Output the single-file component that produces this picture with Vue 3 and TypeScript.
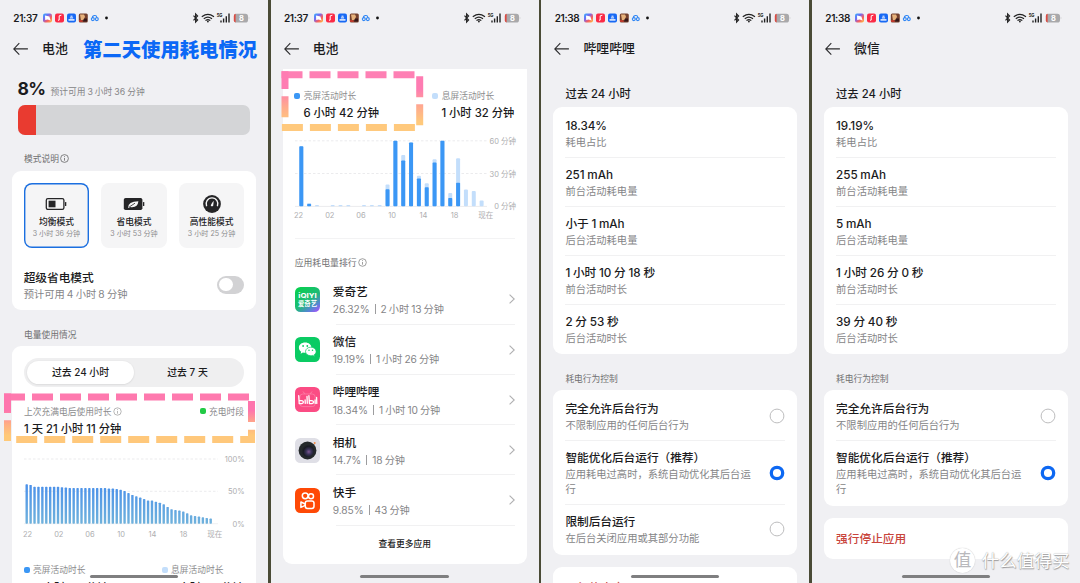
<script setup lang="ts">
interface Detail { value: string; name: string }
interface Choice { title: string; note: string; on: boolean }
interface Phone {
  kind: 'modes' | 'ranking' | 'app'
  time: string
  title: string
  details: Detail[]
  choices: Choice[]
}

const allow: Choice = { title: '完全允许后台行为', note: '不限制应用的任何后台行为', on: false }
const smart: Choice = { title: '智能优化后台运行（推荐）', note: '应用耗电过高时，系统自动优化其后台运行', on: true }
const limit: Choice = { title: '限制后台运行', note: '在后台关闭应用或其部分功能', on: false }

const names = ['耗电占比', '前台活动耗电量', '后台活动耗电量', '前台活动时长', '后台活动时长']
const withNames = (values: string[]): Detail[] => values.map((value, i) => ({ value, name: names[i] }))

const phones: Phone[] = [
  { kind: 'modes', time: '21:37', title: '电池', details: [], choices: [] },
  { kind: 'ranking', time: '21:37', title: '电池', details: [], choices: [] },
  {
    kind: 'app', time: '21:38', title: '哔哩哔哩',
    details: withNames(['18.34%', '251 mAh', '小于 1 mAh', '1 小时 10 分 18 秒', '2 分 53 秒']),
    choices: [allow, smart, limit],
  },
  {
    kind: 'app', time: '21:38', title: '微信',
    details: withNames(['19.19%', '255 mAh', '5 mAh', '1 小时 26 分 0 秒', '39 分 40 秒']),
    choices: [allow, smart],
  },
]

const modes = [
  { icon: 'half', name: '均衡模式', left: '3 小时 36 分钟' },
  { icon: 'leaf', name: '省电模式', left: '3 小时 53 分钟' },
  { icon: 'gauge', name: '高性能模式', left: '3 小时 25 分钟' },
]

const apps = [
  { icon: 'iqiyi', name: '爱奇艺', use: '26.32%', time: '2 小时 13 分钟' },
  { icon: 'wechat', name: '微信', use: '19.19%', time: '1 小时 26 分钟' },
  { icon: 'bili', name: '哔哩哔哩', use: '18.34%', time: '1 小时 10 分钟' },
  { icon: 'camera', name: '相机', use: '14.7%', time: '18 分钟' },
  { icon: 'kuaishou', name: '快手', use: '9.85%', time: '43 分钟' },
]

// Battery level every half hour, in percent
const levels = [
  61, 60, 57, 57, 57, 57, 57, 57, 57, 56.5, 56, 55, 55, 55, 55, 55, 55, 55, 55, 55, 55, 54.5, 54.5, 53.5,
  52.5, 50.5, 47.5, 44.5, 42.5, 40.5, 38, 36, 36, 34, 32.5, 30, 26, 22.5, 21, 20.5, 19, 16, 13, 12, 11, 10, 9, 8,
]
// [screen on, total] minutes per hour
const hours: [number, number][] = [
  [55, 55], [2, 3], [0, 1], [0, 0], [0, 1], [0, 1], [0, 1], [0, 0], [0, 1], [0, 1], [0, 1], [15.5, 20],
  [60, 60], [42, 47], [58.5, 58.5], [25.5, 28], [17.5, 21], [40, 43], [60, 60], [7.5, 12], [21.5, 44],
  [0, 15.3], [0, 14], [0, 5.3],
]
const ticks = ['22', '02', '06', '10', '14', '18', '现在']
const tickX = (i: number): number => (i === 6 ? 214.8 : 27.6 + i * 31.2)
</script>

<template>
  <main class="board">
    <section v-for="(p, n) in phones" :key="n" class="phone">
      <div class="status">
        <span class="clock">{{ p.time }}</span>
        <svg class="notices" width="68" height="10" viewBox="0 0 68 10">
          <defs>
            <linearGradient :id="'rb' + n" x1="0" y1="0" x2="1" y2="1">
              <stop offset="0" stop-color="#2fb4ff" /><stop offset=".35" stop-color="#6f6cf5" /><stop offset=".65" stop-color="#f75d62" /><stop offset="1" stop-color="#ffc93a" />
            </linearGradient>
          </defs>
          <rect x="0" y=".5" width="9" height="9" rx="2" :fill="'url(#rb' + n + ')'" />
          <path d="M2 2.400 6.400 3.600 7.600 7.400 4.600 6.600 2.200 7Z" fill="#fff" />
          <rect x="12" y=".5" width="9" height="9" rx="2" fill="#fb2b46" />
          <path d="M16.200 7V2.800l2.200-.6M15 7.200h1.200" stroke="#fff" stroke-width="1" fill="none" />
          <rect x="24" y=".5" width="9" height="9" rx="2" fill="#1769f4" />
          <path d="M25.500 6.900h6" stroke="#fff" stroke-width="1.400" /><path d="M26.900 4.900h3.200M27.500 3.200h2" stroke="#fff" stroke-width="1" />
          <rect x="35.800" y=".5" width="9" height="9" rx="1.500" fill="#74402d" />
          <path d="M37 1.500h4l1 2-1 3-3 1Z" fill="#e6b27c" />
          <path d="M41 5.500h3v3h-4Z" fill="#35171a" />
          <path d="M36 7h3l1 2h-4Z" fill="#bd3a2c" />
          <g fill="none" stroke="#2f86f5" stroke-width="1.100">
            <path d="M49.500 5.200a2.100 2.100 0 0 1 4.400-.9" /><circle cx="49.800" cy="6.100" r="1.500" /><circle cx="53.800" cy="6.100" r="1.500" />
          </g>
          <circle cx="63.500" cy="5" r="1.400" fill="#111" />
        </svg>
        <svg class="signals" width="58" height="12" viewBox="0 0 58 12">
          <path d="M1.500 3.600 5.600 8 3.600 10V2l2 2-4.100 4.400" fill="none" stroke="#222" stroke-width="1.150" />
          <g fill="none" stroke="#222" stroke-width="1.200" stroke-linecap="round">
            <path d="M10.200 4.500q5.700-4.400 11.400 0M12.200 6.500q3.700-2.900 7.400 0M14 8.300q1.900-1.400 3.800 0" />
          </g>
          <circle cx="15.900" cy="9.500" r=".9" fill="#222" />
          <text x="27.600" y="5.400" class="fiveg" textLength="5.800" lengthAdjust="spacingAndGlyphs">5G</text>
          <path d="M29 10.500V8.400M31.600 10.500V6.400M34.300 10.500V4.200M37 10.500V1.600" stroke="#222" stroke-width="1.400" />
          <rect x="42" y="1.700" width="14" height="8.800" rx="2.600" fill="#a9a9ab" />
          <path d="M43.600 1.700h-.2q-1.600.2-1.600 2.200v4.400q0 2 1.800 2.200Z" fill="#dc4b42" />
          <path d="M56.800 4.600q1 1.500 0 3Z" fill="#a9a9ab" />
          <text x="49.500" y="8.800" class="cell">8</text>
        </svg>
      </div>

      <header class="head">
        <svg width="15" height="14" viewBox="0 0 15 14"><path d="M6.300 1.200.8 6.900l5.500 5.700M.9 6.900h14" fill="none" stroke="#2b2b2d" stroke-width="1.100" /></svg>
        <h1>{{ p.title }}</h1>
      </header>

      <template v-if="p.kind === 'modes'">
        <div class="charge"><b>8%</b><span>预计可用 3 小时 36 分钟</span></div>
        <div class="meter"><i></i></div>
        <div class="caption mode-cap">模式说明
          <svg width="9" height="9" viewBox="0 0 9 9"><circle cx="4.500" cy="4.500" r="3.900" fill="none" stroke="#666" stroke-width=".8" /><path d="M4.500 4v2.700M4.500 2.200v.9" stroke="#666" stroke-width=".8" /></svg>
        </div>
        <div class="card mode-card">
          <div class="modes">
            <div v-for="(m, k) in modes" :key="m.name" class="mode" :class="{ picked: k === 0 }">
              <svg width="24" height="20" viewBox="0 0 24 20">
                <g v-if="m.icon === 'half'">
                  <rect x="2.300" y="5.600" width="17.600" height="10.800" rx="1.600" fill="none" stroke="#252527" stroke-width="1.300" />
                  <rect x="4.600" y="7.700" width="6.900" height="6.600" fill="#252527" /><rect x="21" y="9.100" width="1.300" height="3.800" rx=".5" fill="#252527" />
                </g>
                <g v-else-if="m.icon === 'leaf'">
                  <rect x="1.800" y="5" width="18.600" height="12" rx="1.800" fill="#252527" /><rect x="21" y="9.100" width="1.300" height="3.800" rx=".5" fill="#252527" />
                  <path d="M6.200 14.700q-.4-6 10.200-6.400-.7 7-8.400 5.800l-1.200 1Z" fill="#f5f5f6" /><path d="M7.200 14 13 10.200" stroke="#252527" stroke-width=".8" />
                </g>
                <g v-else>
                  <circle cx="12" cy="11" r="8.900" fill="#252527" />
                  <path d="M6.600 13.200a5.900 5.900 0 1 1 10.800 0" fill="none" stroke="#f5f5f6" stroke-width="1.400" />
                  <path d="m13.700 7.700-.5 5q-1.200 1.300-2.400 0-.2-1 2.900-5Z" fill="#f5f5f6" />
                </g>
              </svg>
              <strong>{{ m.name }}</strong>
              <small>{{ m.left }}</small>
            </div>
          </div>
          <div class="super">
            <div><h2>超级省电模式</h2><p>预计可用 4 小时 8 分钟</p></div>
            <span class="toggle"></span>
          </div>
        </div>
        <div class="caption use-cap">电量使用情况</div>
        <div class="card use-card">
          <div class="tabs"><span class="tab on">过去 24 小时</span><span class="tab">过去 7 天</span></div>
          <div class="since">
            <span>上次充满电后使用时长
              <svg width="9" height="9" viewBox="0 0 9 9"><circle cx="4.500" cy="4.500" r="3.700" fill="none" stroke="#999" stroke-width=".7" /><path d="M4.500 4v2.700M4.500 2.200v.9" stroke="#999" stroke-width=".7" /></svg>
            </span>
            <span class="key"><i class="green"></i>充电时段</span>
          </div>
          <div class="duration">1 天 21 小时 11 分钟</div>
          <svg class="chart" width="244" height="90" viewBox="12 452 244 90">
            <defs>
              <linearGradient id="level" gradientUnits="userSpaceOnUse" x1="0" y1="484" x2="0" y2="524">
                <stop offset="0" stop-color="#4a90ea" /><stop offset="1" stop-color="#70b2dc" />
              </linearGradient>
            </defs>
            <path d="M24 459h194M24 491.300h194" stroke="#e6e6e8" stroke-width=".8" stroke-dasharray="2.500 2" />
            <path d="M24 523.700h194" stroke="#ececee" stroke-width=".8" />
            <rect v-for="(v, k) in levels" :key="k" :x="25.5 + k * 3.915" :y="523.7 - v * 0.647" width="2.400" :height="v * 0.647" rx=".7" fill="url(#level)" />
            <g class="axis end"><text x="244.700" y="462">100%</text><text x="244.700" y="494.300">50%</text><text x="244.700" y="526.700">0%</text></g>
            <g class="axis mid"><text v-for="(t, k) in ticks" :key="t" :x="tickX(k)" y="536.500">{{ t }}</text></g>
          </svg>
          <div class="legend low">
            <div><span class="key"><i class="blue"></i>亮屏活动时长</span><b>6 小时 42 分钟</b></div>
            <div><span class="key"><i class="pale"></i>息屏活动时长</span><b>1 小时 32 分钟</b></div>
          </div>
        </div>
      </template>

      <template v-else-if="p.kind === 'ranking'">
        <div class="card rank-card">
          <div class="legend">
            <div><span class="key"><i class="blue"></i>亮屏活动时长</span><b>6 小时 42 分钟</b></div>
            <div><span class="key"><i class="pale"></i>息屏活动时长</span><b>1 小时 32 分钟</b></div>
          </div>
          <svg class="chart" width="244" height="107" viewBox="12 131.500 244 107">
            <path d="M24 140.300h192M24 173h192" stroke="#e6e6e8" stroke-width=".8" stroke-dasharray="2.500 2" />
            <path d="M24 205.900h192" stroke="#e6e6e8" stroke-width=".8" />
            <g v-for="(h, k) in hours" :key="k">
              <rect :x="28.3 + k * 7.84" :y="205.7 - h[1] * 1.09" width="4" :height="h[1] * 1.09" rx="1" fill="#c3defb" />
              <rect :x="28.3 + k * 7.84" :y="205.7 - h[0] * 1.09" width="4" :height="h[0] * 1.09" rx=".8" fill="#3b97f5" />
            </g>
            <g class="axis end"><text x="245" y="143.900">60 分钟</text><text x="245" y="176.200">30 分钟</text><text x="245" y="208.900">0 分钟</text></g>
            <g class="axis mid"><text v-for="(t, k) in ticks" :key="t" :x="tickX(k)" y="217.900">{{ t }}</text></g>
            <path d="M24 238.100h220" stroke="#eeeeef" stroke-width=".8" />
          </svg>
          <div class="caption rank-cap">应用耗电量排行
            <svg width="9" height="9" viewBox="0 0 9 9"><circle cx="4.500" cy="4.500" r="3.800" fill="none" stroke="#777" stroke-width=".7" /><path d="M4.500 4v2.700M4.500 2.200v.9" stroke="#777" stroke-width=".7" /></svg>
          </div>
          <div v-for="a in apps" :key="a.name" class="app">
            <svg width="25" height="25" viewBox="0 0 25 25">
              <g v-if="a.icon === 'iqiyi'">
                <defs>
                  <linearGradient id="iq" x1=".2" y1="0" x2=".95" y2="1"><stop offset="0" stop-color="#08cf50" /><stop offset=".5" stop-color="#1eba78" /><stop offset=".78" stop-color="#5685d6" /><stop offset="1" stop-color="#b04dff" /></linearGradient>
                </defs>
                <rect width="25" height="25" rx="5.500" fill="url(#iq)" />
                <text x="12.500" y="11" class="iq" textLength="18.500" lengthAdjust="spacingAndGlyphs">iQIYI</text>
                <text x="12.500" y="18.900" class="iq cn">爱奇艺</text>
              </g>
              <g v-else-if="a.icon === 'wechat'">
                <rect width="25" height="25" rx="5.500" fill="#0acb63" />
                <path d="M10.200 5.600c-3.600 0-6.300 2.200-6.300 5.100 0 1.700.9 3 2.300 4l-.6 2 2.300-1.200q1.200.3 2.500.3c3.500 0 6-2.200 6-5.100s-2.700-5.100-6.200-5.100Z" fill="#fff" />
                <path d="M15.800 10.200c-3 0-5.300 2-5.300 4.300s2.300 4.200 5.300 4.200q1 0 2-.3l1.800 1-.5-1.600c1.200-.8 2-1.900 2-3.300 0-2.400-2.300-4.300-5.300-4.300Z" fill="#fff" stroke="#0acb63" stroke-width=".7" />
                <g fill="#0acb63"><circle cx="8.100" cy="9" r=".9" /><circle cx="12.300" cy="9" r=".9" /><circle cx="14" cy="13.300" r=".75" /><circle cx="17.500" cy="13.300" r=".75" /></g>
              </g>
              <g v-else-if="a.icon === 'bili'">
                <rect width="25" height="25" rx="5.500" fill="#fb4c84" />
                <path d="m8 4.500 2 2.500M17 4.500l-2 2.500" stroke="#fc7ba4" stroke-width="1" /><rect x="4.800" y="7" width="15.400" height="12.600" rx="3" fill="none" stroke="#fc7ba4" stroke-width=".9" />
                <g fill="none" stroke="#fff" stroke-width="1.300" stroke-linecap="round">
                  <path d="M3.700 8.700 4.200 16.500q4.200.5 4.200-1.500 0-1.800-3.900-1.300M10.100 12.900l.2 3.500M12 9.500l.3 6.900" />
                  <path d="M13.900 8.700 14.400 16.500q4.200.5 4.200-1.500 0-1.800-3.900-1.300M20.100 12.900l.1 3.500M21.600 10.500l.2 5.900" />
                </g>
              </g>
              <g v-else-if="a.icon === 'camera'">
                <defs>
                  <radialGradient id="lens" cx=".6" cy=".6" r=".6"><stop offset="0" stop-color="#7d5792" /><stop offset=".35" stop-color="#393457" /><stop offset=".7" stop-color="#191c24" /><stop offset="1" stop-color="#262b2d" /></radialGradient>
                </defs>
                <rect width="25" height="25" rx="5.500" fill="#dfdfe6" />
                <circle cx="12.500" cy="12.500" r="8.900" fill="#24292b" /><circle cx="12.500" cy="12.500" r="6.500" fill="url(#lens)" /><circle cx="19.700" cy="5" r="1" fill="#f28a43" />
              </g>
              <g v-else>
                <rect width="25" height="25" rx="5.500" fill="#fe4906" />
                <g fill="none" stroke="#fff" stroke-width="1.500">
                  <circle cx="10.200" cy="7.800" r="2.900" /><circle cx="16" cy="8.200" r="2.500" /><rect x="10.300" y="12.900" width="8.700" height="7.600" rx="2.200" /><path d="m10.200 16-4.300-2v5.400l4.300-2" stroke-linejoin="round" />
                </g>
              </g>
            </svg>
            <div class="app-body">
              <div><h2>{{ a.name }}</h2><p>{{ a.use }}<i></i>{{ a.time }}</p></div>
              <svg width="6" height="10" viewBox="0 0 6 10"><path d="m.6.6 4.600 4.400L.6 9.400" fill="none" stroke="#b0b0b2" stroke-width="1.100" /></svg>
            </div>
          </div>
          <div class="more">查看更多应用</div>
        </div>
      </template>

      <template v-else>
        <h3 class="period">过去 24 小时</h3>
        <div class="card detail-card">
          <div v-for="d in p.details" :key="d.name" class="detail"><h2>{{ d.value }}</h2><p>{{ d.name }}</p></div>
        </div>
        <div class="caption control-cap">耗电行为控制</div>
        <div class="card">
          <div v-for="c in p.choices" :key="c.title" class="choice">
            <div><h2>{{ c.title }}</h2><p>{{ c.note }}</p></div>
            <svg class="radio" width="16" height="16" viewBox="0 0 16 16">
              <circle v-if="c.on" cx="8" cy="8" r="5.700" fill="#fff" stroke="#0d68f2" stroke-width="3.300" />
              <circle v-else cx="8" cy="8" r="6.900" fill="none" stroke="#b5b5b7" stroke-width=".9" />
            </svg>
          </div>
        </div>
        <div class="card stop">强行停止应用</div>
      </template>

      <span class="home"></span>
    </section>

    <div class="note">第二天使用耗电情况</div>
    <svg class="marks" width="430" height="450" viewBox="0 0 430 450">
      <defs>
        <linearGradient id="m1" gradientUnits="userSpaceOnUse" x1="0" y1="393" x2="0" y2="443">
          <stop offset=".35" stop-color="#fe75ad" /><stop offset=".62" stop-color="#ffad84" /><stop offset=".85" stop-color="#ffc978" />
        </linearGradient>
        <linearGradient id="m2" gradientUnits="userSpaceOnUse" x1="0" y1="71" x2="0" y2="131">
          <stop offset=".3" stop-color="#fe7cb2" /><stop offset=".6" stop-color="#ffab8e" /><stop offset=".85" stop-color="#ffc97b" />
        </linearGradient>
      </defs>
      <g fill="none" stroke="url(#m1)" stroke-width="7">
        <path d="M4 397h245.200" stroke-dasharray="21 7" stroke="#fe79ae" />
        <path d="M7.500 393.500V413M7.500 420.300V441M251.500 401v21M251.500 429.700V443" />
        <path d="M16.200 439.500H255" stroke-dasharray="21 7" stroke="#ffc87b" />
      </g>
      <g fill="none" stroke="url(#m2)" stroke-width="7">
        <path d="M281.500 74.800h133.200" stroke-dasharray="21 7" stroke="#fe80b4" />
        <path d="M285 71.300V89M285 96.300v21M419.700 76.300v21M419.700 104.300v21" />
        <path d="M281.900 127.600h133" stroke-dasharray="21 7" stroke="#ffc97d" />
      </g>
    </svg>
    <div class="watermark"><span>值</span>什么值得买</div>
  </main>
</template>

<style>
body { margin: 0; background: #4a4b36; }
</style>

<style scoped>
.board {
  position: relative; display: grid; grid-template-columns: repeat(4, 267.9px); column-gap: 2.8px;
  width: 1080px; height: 583px; overflow: hidden; background: #4a4b36; color: #1b1b1d;
  font-family: Inter, "Noto Sans CJK SC", sans-serif; font-size: 10.25px;
}
.phone { position: relative; height: 583px; overflow: hidden; background: #f0f0f3; }
h1, h2, h3, p { margin: 0; white-space: nowrap; }
h1 { font-size: 12.9px; font-weight: 500; line-height: 20px; }
h2 { font-size: 11.7px; font-weight: 500; line-height: 16px; letter-spacing: -.04px; word-spacing: -.3px; }
p { font-size: 10.3px; line-height: 16px; color: #858587; }
svg { display: block; flex: none; }

.status { display: flex; align-items: center; height: 35px; padding-left: 13.3px; }
.clock { width: 29.7px; font-size: 10px; font-weight: 600; letter-spacing: -.35px; white-space: nowrap; }
.signals { margin-left: 81px; }
.fiveg { font-size: 5px; font-weight: 700; text-anchor: middle; fill: #222; }
.cell { font-size: 7.5px; font-weight: 700; text-anchor: middle; fill: #fff; }
.iq { font-size: 6.6px; font-weight: 700; text-anchor: middle; fill: #fff; }
.iq.cn { font-size: 6.3px; }
.head { display: flex; align-items: center; gap: 14px; height: 33px; padding: 0 0 0 13px; box-sizing: border-box; }
.head svg { margin-top: -5px; }
.head h1 { margin-top: -4.5px; }

.card { margin: 0 12px; border-radius: 9px; background: #fff; width: 244px; box-sizing: border-box; overflow: hidden; }
.caption { display: flex; align-items: center; gap: 1px; padding-left: 24px; box-sizing: border-box; font-size: 8.75px; color: #707072; white-space: nowrap; }
.charge { display: flex; align-items: baseline; gap: 5px; height: 37px; padding: 10px 0 0 17.5px; box-sizing: border-box; line-height: 22px; }
.charge b { font-size: 17.5px; font-weight: 700; letter-spacing: -.6px; }
.charge span { font-size: 8.75px; letter-spacing: -.02px; word-spacing: -.4px; color: #858587; }
.meter { width: 232.5px; height: 30px; margin-left: 17.5px; border-radius: 7px; background: #d4d5d7; overflow: hidden; }
.meter i { display: block; width: 18.7px; height: 30px; background: #e93b30; }
.mode-cap { height: 35.7px; padding-top: 11.7px; }
.mode-card { height: 139.8px; padding: 12.6px 11.7px 0; }
.modes { display: flex; justify-content: space-between; }
.mode { display: flex; flex-direction: column; align-items: center; width: 65.5px; height: 65px; padding-top: 10px; box-sizing: border-box; border-radius: 8px; background: #f5f5f6; white-space: nowrap; }
.mode.picked { box-shadow: inset 0 0 0 1.4px #1b6fe0; }
.mode strong { font-size: 8.75px; line-height: 12px; font-weight: 500; margin-top: 3px; }
.mode small { font-size: 7.1px; line-height: 10px; margin-top: .5px; color: #8c8c8e; }
.super { display: flex; justify-content: space-between; align-items: center; margin-top: 21.3px; }
.super p { font-size: 10.25px; word-spacing: -.7px; }
.toggle { width: 27.5px; height: 18px; margin-top: -2px; padding: 2.3px; box-sizing: border-box; border-radius: 9px; background: #d2d2d4; }
.toggle::before { content: ""; display: block; width: 13.4px; height: 13.4px; border-radius: 50%; background: #fff; }
.use-cap { height: 35.5px; padding-top: 13.5px; }
.use-card { height: 260px; padding-top: 12px; }
.tabs { display: flex; width: 220px; height: 29px; margin-left: 12px; padding: 3px; box-sizing: border-box; border-radius: 15px; background: #efeff0; font-size: 9.9px; font-weight: 500; line-height: 23px; text-align: center; }
.tab { width: 107px; height: 23px; border-radius: 12px; }
.tab.on { background: #fff; box-shadow: 0 .5px 2px rgba(0, 0, 0, .12); }
.since { display: flex; justify-content: space-between; align-items: center; height: 16px; margin: 16.5px 12px 0; font-size: 8.75px; color: #8c8c8e; }
.since span { display: flex; align-items: center; gap: 1px; }
.key { display: flex; align-items: center; white-space: nowrap; }
.key i { width: 6px; height: 6px; margin-right: 3.5px; border-radius: 2px; flex: none; }
.since .key i { margin-right: 2.5px; }
.green { background: #22ca45; }
.blue { background: #3b97f5; }
.pale { background: #c3defb; }
.duration { margin: 1.5px 12px 0; height: 16px; line-height: 16px; font-size: 11.3px; font-weight: 500; white-space: nowrap; }
.use-card .chart { margin-top: 15px; }
.axis { font-size: 7.5px; fill: #aeaeb0; }
.end { text-anchor: end; }
.mid { text-anchor: middle; }
.legend { display: grid; grid-template-columns: 138px auto; padding-left: 11.5px; font-size: 8.75px; line-height: 16px; color: #8c8c8e; }
.legend b { display: block; margin: 1.3px 0 0 9.2px; font-size: 11.3px; font-weight: 500; line-height: 17px; color: #1b1b1d; white-space: nowrap; }
.low { margin-top: 20.5px; }
.low b { margin-top: 1.8px; }

.rank-card { height: 495.5px; margin-top: .5px; border-radius: 0 0 9px 9px; padding-top: 19.5px; }
.rank-card .chart { margin-top: 9.7px; }
.rank-cap { height: 35.3px; padding: 12.7px 0 0 12px; font-size: 8.85px; }
.app { display: flex; align-items: center; gap: 12.8px; height: 50.25px; padding-left: 12.3px; }
.app-body { position: relative; display: flex; justify-content: space-between; align-items: center; width: 181.8px; height: 100%; }
.app-body::after, .detail + .detail::before, .choice + .choice::before { content: ""; position: absolute; height: 1px; background: #f1f1f2; }
.app-body::after { left: 3.5px; right: 0; bottom: 0; }
.app-body > div { padding-top: 2px; }
.app-body p { display: flex; align-items: center; margin-top: 1.3px; font-size: 10.2px; letter-spacing: -.1px; word-spacing: -.6px; }
.app-body p i { width: 1px; height: 10px; margin: 0 5px; background: #9c9c9e; }
.more { height: 37px; line-height: 36px; text-align: center; font-size: 8.75px; font-weight: 500; }

.period { height: 39px; padding: 18px 0 0 24px; box-sizing: border-box; font-size: 11.3px; line-height: 16px; font-weight: 500; }
.detail-card { padding: .8px 0 .7px; }
.detail { position: relative; height: 49.16px; padding: 9.8px 12px 0; box-sizing: border-box; }
.detail + .detail::before, .choice + .choice::before { top: 0; left: 12px; right: 12px; }
.control-cap { height: 35.7px; padding-top: 13.2px; }
.choice { position: relative; display: flex; justify-content: space-between; align-items: center; padding: 9.5px 12.5px 6.5px 12px; }
.choice:first-child { padding-top: 11px; padding-bottom: 7px; }
.choice:last-child { padding-bottom: 8.3px; }
.choice p { width: 190px; line-height: 15.5px; margin-top: 1px; white-space: normal; }
.radio { margin-top: -2.6px; }
.stop { height: 41px; margin-top: 12px; padding-left: 12px; line-height: 42px; font-size: 11.7px; font-weight: 500; color: #c8443c; }

.home { position: absolute; left: 89.7px; top: 574.8px; width: 88.3px; height: 2.8px; border-radius: 2px; background: #7f7f80; }
.note { position: absolute; left: 83px; top: 37px; font-size: 19.35px; line-height: 27px; font-weight: 900; color: #0b68f6; white-space: nowrap; }
.marks { position: absolute; left: 0; top: 0; }
.watermark { position: absolute; left: 950px; top: 547.5px; display: flex; align-items: center; gap: 6.5px; height: 26px; line-height: 24px; font-size: 17.6px; white-space: nowrap; color: #fff; text-shadow: 0 0 1px #9b9b9d, .6px .6px 1px #9b9b9d; }
.watermark span { width: 25px; height: 25px; border-radius: 50%; background: #fff; color: #b9b9bc; text-align: center; line-height: 24px; text-shadow: none; box-shadow: 0 0 1px #b0b0b2; }
</style>
